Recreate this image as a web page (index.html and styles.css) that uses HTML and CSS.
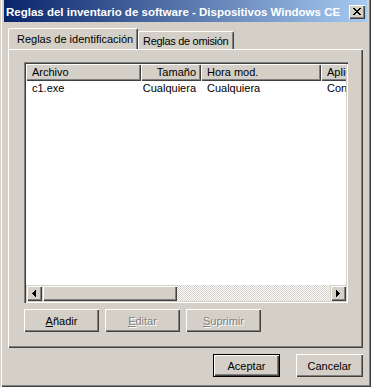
FILE: index.html
```html
<html>
	<head>
		<link rel="stylesheet" href="styles.css">
	</head>
	<body>
		<div class="window">
			<div class="titlebar">
				<span class="title">Reglas del inventario de software - Dispositivos Windows CE</span>
				<div class="close">
					<svg width="8" height="7" viewBox="0 0 8 7" shape-rendering="crispEdges">
						<path fill="#000" d="M0 0h2v1h-2zM6 0h2v1h-2zM1 1h2v1h-2zM5 1h2v1h-2zM2 2h4v1h-4zM3 3h2v1h-2zM2 4h4v1h-4zM1 5h2v1h-2zM5 5h2v1h-2zM0 6h2v1h-2zM6 6h2v1h-2z"/>
					</svg>
				</div>
			</div>
			<div class="tabs">
				<div class="tab selected">Reglas de identificación</div>
				<div class="tab other">Reglas de omisión</div>
			</div>
			<div class="panel">
				<div class="list">
					<div class="header">
						<div class="col c1 hcell">Archivo</div>
						<div class="col c2 hcell right">Tamaño</div>
						<div class="col c3 hcell">Hora mod.</div>
						<div class="col c4 hcell">Aplic</div>
					</div>
					<div class="rows">
						<div class="row">
							<div class="col c1">c1.exe</div>
							<div class="col c2 right">Cualquiera</div>
							<div class="col c3">Cualquiera</div>
							<div class="col c4">Cons</div>
						</div>
					</div>
					<div class="hscroll">
						<div class="sbtn">
							<svg width="4" height="7" viewBox="0 0 4 7" shape-rendering="crispEdges">
								<path fill="#000" d="M0 3h1v1h-1zM1 2h1v3h-1zM2 1h1v5h-1zM3 0h1v7h-1z"/>
							</svg>
						</div>
						<div class="thumb"></div>
						<div class="track"></div>
						<div class="sbtn">
							<svg width="4" height="7" viewBox="0 0 4 7" shape-rendering="crispEdges">
								<path fill="#000" d="M3 3h1v1h-1zM2 2h1v3h-1zM1 1h1v5h-1zM0 0h1v7h-1z"/>
							</svg>
						</div>
					</div>
				</div>
				<div class="actions">
					<div class="button"><u>A</u>ñadir</div>
					<div class="button disabled"><u>E</u>ditar</div>
					<div class="button disabled"><u>S</u>uprimir</div>
				</div>
			</div>
			<div class="footer">
				<div class="button small default">Aceptar</div>
				<div class="button small">Cancelar</div>
			</div>
		</div>
	</body>
</html>
```
FILE: styles.css
```css
*{
	box-sizing: border-box;
}
body{
	margin: 0;
	width: 371px;
	height: 387px;
	overflow: hidden;
	background: #D4D0C8;
	font-family: "Liberation Sans", Arial, sans-serif;
	font-size: 11px;
	color: #000;
}
.window{
	height: 387px;
	padding: 0 4px 4px 4px;
	display: flex;
	flex-direction: column;
	box-shadow: inset 1px 0 #D4D0C8, inset 2px 0 #fff, inset -1px -1px #404040, inset -2px -2px #808080;
}
.titlebar{
	height: 22px;
	flex-shrink: 0;
	display: flex;
	align-items: center;
	justify-content: space-between;
	padding: 1px 2px 0 2px;
	background: linear-gradient(to right, #0A246A, #A6CAF0);
	color: #fff;
	font-weight: bold;
	font-size: 11.5px;
	white-space: nowrap;
}
.close{
	flex-shrink: 0;
	width: 16px;
	height: 14px;
	background: #D4D0C8;
	display: flex;
	align-items: center;
	justify-content: center;
	box-shadow: inset 1px 1px #fff, inset -1px -1px #404040, inset -2px -2px #808080;
}
.tabs{
	display: flex;
	align-items: flex-end;
	height: 20px;
	margin: 7px 4px 0 4px;
	flex-shrink: 0;
}
.tab{
	height: 18px;
	padding: 3px 4px 0 4px;
	border: 1px solid;
	border-bottom: none;
	border-color: #fff #404040 transparent #fff;
	border-radius: 2px 2px 0 0;
	box-shadow: inset -1px 0 #808080;
	white-space: nowrap;
}
.tab.other{
	width: 96px;
	letter-spacing: -0.3px;
}
.tab.selected{
	height: 21px;
	width: 130px;
	padding: 4px 0 0 8px;
	position: relative;
	z-index: 1;
	background: #D4D0C8;
}
.panel{
	margin: 0 4px;
	height: 299px;
	flex-shrink: 0;
	padding: 13px 15px 16px 16px;
	box-shadow: inset 1px 1px #fff, inset -1px -1px #404040, inset -2px -2px #808080;
}
.list{
	height: 241px;
	padding: 2px;
	background: #fff;
	display: flex;
	flex-direction: column;
	overflow: hidden;
	box-shadow: inset 1px 1px #808080, inset 2px 2px #404040, inset -1px -1px #fff, inset -2px -2px #D4D0C8;
}
.header, .row{
	display: flex;
	overflow: hidden;
	flex-shrink: 0;
	white-space: nowrap;
}
.header{
	height: 17px;
	line-height: 16px;
}
.col{
	flex: none;
	overflow: hidden;
	padding-left: 6px;
}
.c1{ width: 115px; }
.c2{ width: 60px; }
.c3{ width: 120px; }
.c4{ width: 100px; }
.right{
	text-align: right;
	padding: 0 5px 0 0;
}
.hcell{
	background: #D4D0C8;
	box-shadow: inset 1px 1px #fff, inset -1px -1px #404040, inset -2px -2px #808080;
}
.row{
	height: 14px;
	line-height: 14px;
}
.rows{
	flex: 1;
}
.hscroll{
	height: 16px;
	display: flex;
	flex-shrink: 0;
}
.sbtn, .thumb{
	background: #D4D0C8;
	box-shadow: inset 1px 1px #D4D0C8, inset 2px 2px #fff, inset -1px -1px #404040, inset -2px -2px #808080;
}
.sbtn{
	width: 16px;
	display: flex;
	align-items: center;
	justify-content: center;
}
.thumb{
	width: 135px;
}
.track{
	flex: 1;
	background-image: conic-gradient(#fff 25%, #D4D0C8 0 50%, #fff 0 75%, #D4D0C8 0);
	background-size: 2px 2px;
}
.actions{
	display: flex;
	gap: 6px;
	margin-top: 6px;
}
.button{
	width: 75px;
	height: 23px;
	display: flex;
	align-items: center;
	justify-content: center;
	box-shadow: inset 1px 1px #fff, inset -1px -1px #404040, inset -2px -2px #808080;
}
.button.small{
	width: 67px;
}
.button.disabled{
	color: #808080;
	text-shadow: 1px 1px #fff;
}
.button.default{
	box-shadow: inset 0 0 0 1px #000, inset 2px 2px #fff, inset -2px -2px #404040, inset -3px -3px #808080;
}
.footer{
	display: flex;
	justify-content: flex-end;
	gap: 16px;
	margin: 6px 4px 0 4px;
}
```
